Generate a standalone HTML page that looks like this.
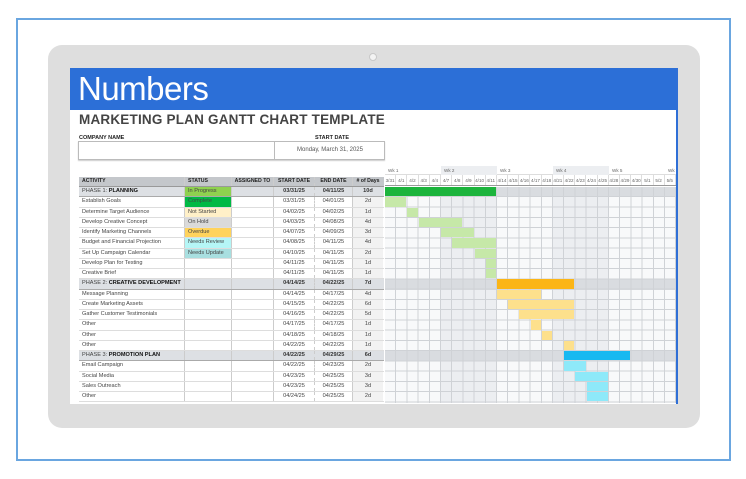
<!DOCTYPE html>
<html><head><style>
*{margin:0;padding:0;box-sizing:border-box}
body{width:746px;height:479px;background:#fff;position:relative;overflow:hidden;font-family:"Liberation Sans",sans-serif}
.a{position:absolute}
#frame{left:16px;top:18px;width:715px;height:443px;border:2px solid #6aa6e0}
#tab{left:48px;top:45px;width:652px;height:383px;background:#dedede;border-radius:14px}
#scr{left:70px;top:68px;width:608px;height:336px;background:#fff;overflow:hidden;border-right:2px solid #2f6fd6}
.row{position:absolute;left:9px;height:10.25px;width:305px;font-size:5.6px;color:#444;border-bottom:1px solid #ddd;white-space:nowrap}
.row div{position:absolute;top:0;height:100%;line-height:9.5px}
.c1{left:0;width:106px;padding-left:3px;border-right:1px solid #ccc}
.c2{left:106px;width:47px;padding-left:3px;border-right:1px solid #ccc}
.c3{left:153px;width:42px;border-right:1px solid #ccc}
.c4{left:195px;width:41px;text-align:center;border-right:1px dashed #ccc}
.c5{left:236px;width:38px;text-align:center;border-right:1px solid #ccc}
.c6{left:274px;width:30px;text-align:center;background:#f2f2f2}
.ph{background:#dde0e4;border-bottom:1px solid #aaa}
.ph b{color:#111}
.ph .c4,.ph .c5,.ph .c6{font-weight:bold;color:#333;background:transparent}
.bar{position:absolute;height:9.25px}
</style></head><body>
<div class="a" id="frame"></div>
<div class="a" id="tab"></div>
<div class="a" style="left:369px;top:53px;width:8px;height:8px;border-radius:50%;background:#f3f3f3;border:1px solid #c8c8c8"></div>
<div class="a" id="scr">
<div class="a" style="left:0;top:0;width:608px;height:42px;background:#2c6fd7"></div>
<div class="a" style="left:8px;top:2px;font-size:33px;color:#fff;letter-spacing:-0.5px">Numbers</div>
<div class="a" style="left:9px;top:44px;font-size:13.5px;font-weight:bold;color:#444;letter-spacing:0.2px">MARKETING PLAN GANTT CHART TEMPLATE</div>
<div class="a" style="left:9px;top:67px;font-size:5.5px;font-weight:bold;color:#222">COMPANY NAME</div>
<div class="a" style="left:245px;top:67px;font-size:5.5px;font-weight:bold;color:#222">START DATE</div>
<div class="a" style="left:8px;top:73px;width:307px;height:19px;border:1px solid #bbb;box-shadow:0 1px 1px #ccc"></div>
<div class="a" style="left:204px;top:73px;width:1px;height:19px;background:#bbb"></div>
<div class="a" style="left:205px;top:79px;width:110px;text-align:center;font-size:6px;color:#555">Monday, March 31, 2025</div>
<div class="row" style="top:109px;background:#c4c7cb;font-weight:bold;color:#222;font-size:5.2px;border-bottom:1px solid #999"><div class="c1">ACTIVITY</div><div class="c2">STATUS</div><div class="c3" style="text-align:center">ASSIGNED TO</div><div class="c4">START DATE</div><div class="c5">END DATE</div><div class="c6" style="background:transparent"># of Days</div></div>

<div class="row ph" style="top:119px"><div class="c1">PHASE 1: <b>PLANNING</b></div><div class="c2" style="background:#8fd14f">In Progress</div><div class="c3"></div><div class="c4">03/31/25</div><div class="c5">04/11/25</div><div class="c6">10d</div></div>
<div class="row" style="top:129.25px"><div class="c1">Establish Goals</div><div class="c2" style="background:#00b945">Complete</div><div class="c3"></div><div class="c4">03/31/25</div><div class="c5">04/01/25</div><div class="c6">2d</div></div>
<div class="row" style="top:139.5px"><div class="c1">Determine Target Audience</div><div class="c2" style="background:#fff0c8">Not Started</div><div class="c3"></div><div class="c4">04/02/25</div><div class="c5">04/02/25</div><div class="c6">1d</div></div>
<div class="row" style="top:149.75px"><div class="c1">Develop Creative Concept</div><div class="c2" style="background:#dadada">On Hold</div><div class="c3"></div><div class="c4">04/03/25</div><div class="c5">04/08/25</div><div class="c6">4d</div></div>
<div class="row" style="top:160px"><div class="c1">Identify Marketing Channels</div><div class="c2" style="background:#ffd35c">Overdue</div><div class="c3"></div><div class="c4">04/07/25</div><div class="c5">04/09/25</div><div class="c6">3d</div></div>
<div class="row" style="top:170.25px"><div class="c1">Budget and Financial Projection</div><div class="c2" style="background:#b5f6f6">Needs Review</div><div class="c3"></div><div class="c4">04/08/25</div><div class="c5">04/11/25</div><div class="c6">4d</div></div>
<div class="row" style="top:180.5px"><div class="c1">Set Up Campaign Calendar</div><div class="c2" style="background:#a8dfe0">Needs Update</div><div class="c3"></div><div class="c4">04/10/25</div><div class="c5">04/11/25</div><div class="c6">2d</div></div>
<div class="row" style="top:190.75px"><div class="c1">Develop Plan for Testing</div><div class="c2"></div><div class="c3"></div><div class="c4">04/11/25</div><div class="c5">04/11/25</div><div class="c6">1d</div></div>
<div class="row" style="top:201px"><div class="c1">Creative Brief</div><div class="c2"></div><div class="c3"></div><div class="c4">04/11/25</div><div class="c5">04/11/25</div><div class="c6">1d</div></div>
<div class="row ph" style="top:211.25px"><div class="c1">PHASE 2: <b>CREATIVE DEVELOPMENT</b></div><div class="c2"></div><div class="c3"></div><div class="c4">04/14/25</div><div class="c5">04/22/25</div><div class="c6">7d</div></div>
<div class="row" style="top:221.5px"><div class="c1">Message Planning</div><div class="c2"></div><div class="c3"></div><div class="c4">04/14/25</div><div class="c5">04/17/25</div><div class="c6">4d</div></div>
<div class="row" style="top:231.75px"><div class="c1">Create Marketing Assets</div><div class="c2"></div><div class="c3"></div><div class="c4">04/15/25</div><div class="c5">04/22/25</div><div class="c6">6d</div></div>
<div class="row" style="top:242px"><div class="c1">Gather Customer Testimonials</div><div class="c2"></div><div class="c3"></div><div class="c4">04/16/25</div><div class="c5">04/22/25</div><div class="c6">5d</div></div>
<div class="row" style="top:252.25px"><div class="c1">Other</div><div class="c2"></div><div class="c3"></div><div class="c4">04/17/25</div><div class="c5">04/17/25</div><div class="c6">1d</div></div>
<div class="row" style="top:262.5px"><div class="c1">Other</div><div class="c2"></div><div class="c3"></div><div class="c4">04/18/25</div><div class="c5">04/18/25</div><div class="c6">1d</div></div>
<div class="row" style="top:272.75px"><div class="c1">Other</div><div class="c2"></div><div class="c3"></div><div class="c4">04/22/25</div><div class="c5">04/22/25</div><div class="c6">1d</div></div>
<div class="row ph" style="top:283px"><div class="c1">PHASE 3: <b>PROMOTION PLAN</b></div><div class="c2"></div><div class="c3"></div><div class="c4">04/22/25</div><div class="c5">04/29/25</div><div class="c6">6d</div></div>
<div class="row" style="top:293.25px"><div class="c1">Email Campaign</div><div class="c2"></div><div class="c3"></div><div class="c4">04/22/25</div><div class="c5">04/23/25</div><div class="c6">2d</div></div>
<div class="row" style="top:303.5px"><div class="c1">Social Media</div><div class="c2"></div><div class="c3"></div><div class="c4">04/23/25</div><div class="c5">04/25/25</div><div class="c6">3d</div></div>
<div class="row" style="top:313.75px"><div class="c1">Sales Outreach</div><div class="c2"></div><div class="c3"></div><div class="c4">04/23/25</div><div class="c5">04/25/25</div><div class="c6">3d</div></div>
<div class="row" style="top:324px"><div class="c1">Other</div><div class="c2"></div><div class="c3"></div><div class="c4">04/24/25</div><div class="c5">04/25/25</div><div class="c6">2d</div></div>

<!-- gantt -->
<div class="a" style="left:315px;top:98px;width:300px;height:21px;font-size:4.6px;color:#666">
 <div class="a" style="left:0;top:0;width:293px;height:9px;border-bottom:1px solid #ddd"></div>
 <div class="a" style="left:56px;top:0;width:56px;height:9px;background:#eceef1"></div>
 <div class="a" style="left:168px;top:0;width:56px;height:9px;background:#eceef1"></div>
 <div class="a" style="left:3px;top:2px">Wk 1</div><div class="a" style="left:59px;top:2px">Wk 2</div><div class="a" style="left:115px;top:2px">Wk 3</div><div class="a" style="left:171px;top:2px">Wk 4</div><div class="a" style="left:227px;top:2px">Wk 5</div><div class="a" style="left:283px;top:2px">Wk 6</div>
 <div class="a" style="left:0;top:9px;width:293px;height:11px;border-bottom:1px solid #999;display:flex">
  <span style="width:11.2px;text-align:center;line-height:11px;border-right:1px solid #ddd">3/31</span><span style="width:11.2px;text-align:center;line-height:11px;border-right:1px solid #ddd">4/1</span><span style="width:11.2px;text-align:center;line-height:11px;border-right:1px solid #ddd">4/2</span><span style="width:11.2px;text-align:center;line-height:11px;border-right:1px solid #ddd">4/3</span><span style="width:11.2px;text-align:center;line-height:11px;border-right:1px solid #ddd">4/4</span><span style="width:11.2px;text-align:center;line-height:11px;border-right:1px solid #ddd">4/7</span><span style="width:11.2px;text-align:center;line-height:11px;border-right:1px solid #ddd">4/8</span><span style="width:11.2px;text-align:center;line-height:11px;border-right:1px solid #ddd">4/9</span><span style="width:11.2px;text-align:center;line-height:11px;border-right:1px solid #ddd">4/10</span><span style="width:11.2px;text-align:center;line-height:11px;border-right:1px solid #ddd">4/11</span><span style="width:11.2px;text-align:center;line-height:11px;border-right:1px solid #ddd">4/14</span><span style="width:11.2px;text-align:center;line-height:11px;border-right:1px solid #ddd">4/15</span><span style="width:11.2px;text-align:center;line-height:11px;border-right:1px solid #ddd">4/16</span><span style="width:11.2px;text-align:center;line-height:11px;border-right:1px solid #ddd">4/17</span><span style="width:11.2px;text-align:center;line-height:11px;border-right:1px solid #ddd">4/18</span><span style="width:11.2px;text-align:center;line-height:11px;border-right:1px solid #ddd">4/21</span><span style="width:11.2px;text-align:center;line-height:11px;border-right:1px solid #ddd">4/22</span><span style="width:11.2px;text-align:center;line-height:11px;border-right:1px solid #ddd">4/23</span><span style="width:11.2px;text-align:center;line-height:11px;border-right:1px solid #ddd">4/24</span><span style="width:11.2px;text-align:center;line-height:11px;border-right:1px solid #ddd">4/25</span><span style="width:11.2px;text-align:center;line-height:11px;border-right:1px solid #ddd">4/28</span><span style="width:11.2px;text-align:center;line-height:11px;border-right:1px solid #ddd">4/29</span><span style="width:11.2px;text-align:center;line-height:11px;border-right:1px solid #ddd">4/30</span><span style="width:11.2px;text-align:center;line-height:11px;border-right:1px solid #ddd">5/1</span><span style="width:11.2px;text-align:center;line-height:11px;border-right:1px solid #ddd">5/2</span><span style="width:11.2px;text-align:center;line-height:11px;border-right:1px solid #ddd">5/5</span>
 </div>
</div>
<div class="a" style="left:315px;top:119px;width:293px;height:216px;background:#f8f9fa">
 <div class="a" style="left:56px;top:0;width:56px;height:216px;background:#eceef1"></div>
 <div class="a" style="left:168px;top:0;width:56px;height:216px;background:#eceef1"></div>
 <div class="a" style="left:0;top:0;width:293px;height:10.25px;background:#d9dce0"></div>
 <div class="a" style="left:0;top:92.25px;width:293px;height:10.25px;background:#d9dce0"></div>
 <div class="a" style="left:0;top:164px;width:293px;height:10.25px;background:#d9dce0"></div>
 <div class="a" style="left:0;top:0;width:293px;height:216px;background-image:repeating-linear-gradient(90deg,transparent 0 10.2px,#cfd2d6 10.2px 11.2px),repeating-linear-gradient(180deg,transparent 0 9.25px,#cfd2d6 9.25px 10.25px)"></div>
 <div class="bar" style="left:0;top:0;width:111px;background:#1cb43c"></div>
 <div class="bar" style="left:0;top:10.25px;width:21.4px;background:#c6e8a8"></div>
 <div class="bar" style="left:22.4px;top:20.5px;width:10.2px;background:#c6e8a8"></div>
 <div class="bar" style="left:33.6px;top:30.75px;width:43.8px;background:#c6e8a8"></div>
 <div class="bar" style="left:56px;top:41px;width:32.6px;background:#c6e8a8"></div>
 <div class="bar" style="left:67.2px;top:51.25px;width:43.8px;background:#c6e8a8"></div>
 <div class="bar" style="left:89.6px;top:61.5px;width:21.4px;background:#c6e8a8"></div>
 <div class="bar" style="left:100.8px;top:71.75px;width:10.2px;background:#c6e8a8"></div>
 <div class="bar" style="left:100.8px;top:82px;width:10.2px;background:#c6e8a8"></div>
 <div class="bar" style="left:112px;top:92.25px;width:77.4px;background:#fbb516"></div>
 <div class="bar" style="left:112px;top:102.5px;width:43.8px;background:#fde08c"></div>
 <div class="bar" style="left:123.2px;top:112.75px;width:66.2px;background:#fde08c"></div>
 <div class="bar" style="left:134.4px;top:123px;width:55px;background:#fde08c"></div>
 <div class="bar" style="left:145.6px;top:133.25px;width:10.2px;background:#fde08c"></div>
 <div class="bar" style="left:156.8px;top:143.5px;width:10.2px;background:#fde08c"></div>
 <div class="bar" style="left:179.2px;top:153.75px;width:10.2px;background:#fde08c"></div>
 <div class="bar" style="left:179.2px;top:164px;width:66.2px;background:#18b9f1"></div>
 <div class="bar" style="left:179.2px;top:174.25px;width:21.4px;background:#8ee9f9"></div>
 <div class="bar" style="left:190.4px;top:184.5px;width:32.6px;background:#8ee9f9"></div>
 <div class="bar" style="left:201.6px;top:194.75px;width:21.4px;background:#8ee9f9"></div>
 <div class="bar" style="left:201.6px;top:205px;width:21.4px;background:#8ee9f9"></div>
</div>
</div>
</body></html>
